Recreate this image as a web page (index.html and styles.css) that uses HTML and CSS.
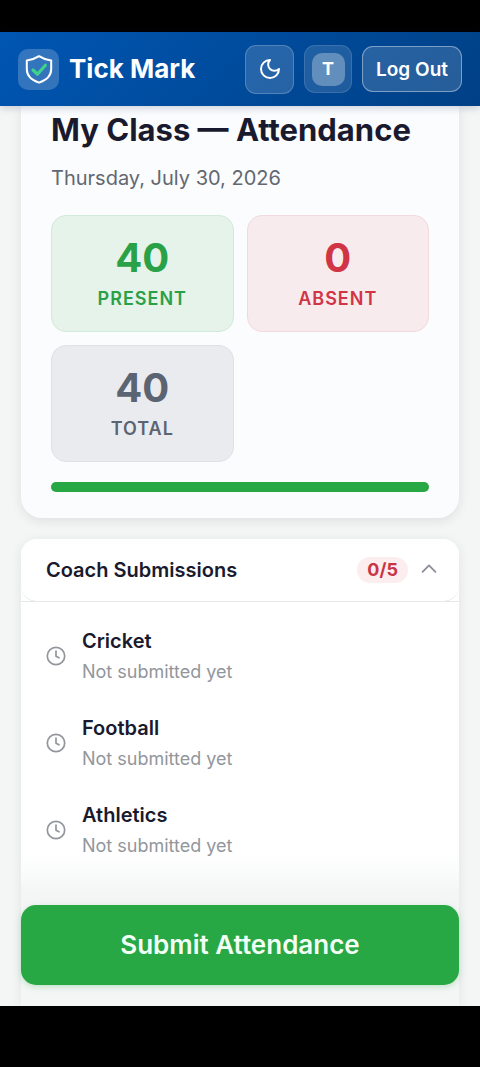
FILE: index.html
```html
<!DOCTYPE html>
<html lang="en">
<head>
<meta charset="utf-8">
<meta name="viewport" content="width=device-width, initial-scale=1">
<title>Tick Mark</title>
<link rel="stylesheet" href="styles.css">
</head>
<body>
<div class="app">
  <header class="topbar">
    <span class="logo">
      <svg width="34" height="34" viewBox="0 0 34 34" fill="none" stroke-linecap="round" stroke-linejoin="round" aria-hidden="true">
        <path d="M17 4.200C13.400 6.600 9 8 4.800 8.500V17c0 7 5.300 11.400 12.200 13.600C23.900 28.400 29.200 24 29.200 17V8.500C25 8 20.600 6.600 17 4.200Z" stroke="#fff" stroke-width="2"/>
        <path d="m11 18 4.400 4.200 8-9" stroke="#3fd28b" stroke-width="3.200"/>
      </svg>
    </span>
    <span class="brand">Tick Mark</span>
    <button class="icon-btn theme" type="button" aria-label="Dark mode">
      <svg width="24" height="24" viewBox="0 0 24 24" fill="none" stroke="#fff" stroke-width="2" stroke-linecap="round" stroke-linejoin="round" aria-hidden="true"><path d="M12 3a6 6 0 0 0 9 9 9 9 0 1 1-9-9Z"/></svg>
    </button>
    <button class="icon-btn profile" type="button" aria-label="Profile"><span class="avatar">T</span></button>
    <button class="logout" type="button">Log Out</button>
  </header>

  <main class="content">
    <section class="summary">
      <h1 class="title">My Class — Attendance</h1>
      <p class="date">Thursday, July 30, 2026</p>
      <div class="stats">
        <div class="stat present"><span class="num">40</span><span class="label">PRESENT</span></div>
        <div class="stat absent"><span class="num">0</span><span class="label">ABSENT</span></div>
        <div class="stat total"><span class="num">40</span><span class="label">TOTAL</span></div>
      </div>
      <div class="bar" role="progressbar" aria-label="Present" aria-valuemin="0" aria-valuemax="40" aria-valuenow="40"><div class="fill" style="width: 100%"></div></div>
    </section>

    <section class="coaches">
      <button class="coaches-head" type="button" aria-expanded="true">
        <span class="coaches-title">Coach Submissions</span>
        <span class="count">0/5</span>
        <svg width="22" height="22" viewBox="0 0 24 24" fill="none" stroke="#8b9098" stroke-width="2" stroke-linecap="round" stroke-linejoin="round" aria-hidden="true"><path d="m5 14 7-7 7 7"/></svg>
      </button>
      <ul class="list">
        <li class="item">
          <svg class="clock" viewBox="0 0 20 20" aria-hidden="true"><circle cx="10" cy="10" r="8.700"/><path d="M10 5v5.200l3 1.600"/></svg>
          <div><h2 class="name">Cricket</h2><p class="state">Not submitted yet</p></div>
        </li>
        <li class="item">
          <svg class="clock" viewBox="0 0 20 20" aria-hidden="true"><circle cx="10" cy="10" r="8.700"/><path d="M10 5v5.200l3 1.600"/></svg>
          <div><h2 class="name">Football</h2><p class="state">Not submitted yet</p></div>
        </li>
        <li class="item">
          <svg class="clock" viewBox="0 0 20 20" aria-hidden="true"><circle cx="10" cy="10" r="8.700"/><path d="M10 5v5.200l3 1.600"/></svg>
          <div><h2 class="name">Athletics</h2><p class="state">Not submitted yet</p></div>
        </li>
      </ul>
    </section>

    <div class="submit-bar">
      <button class="submit" type="button">Submit Attendance</button>
    </div>
  </main>
</div>
</body>
</html>
```
FILE: styles.css
```css
* { box-sizing: border-box; }
body {
  margin: 0;
  height: 100vh;
  padding: 32px 0 61px;
  background: #000;
  color: #1a1a2e;
  font-family: Inter, "Liberation Sans", sans-serif;
}
h1, h2, p, ul { margin: 0; padding: 0; }
button { font: inherit; color: inherit; border: 0; margin: 0; cursor: pointer; }

.app {
  height: 100%;
  display: flex;
  flex-direction: column;
  background: #f4f6f6;
}

.topbar {
  display: flex;
  align-items: center;
  height: 74px;
  flex: none;
  padding: 0 18px;
  background: linear-gradient(135deg, #0056b3, #004085);
  box-shadow: 0 2px 8px rgba(0, 30, 80, 0.2);
  color: #fff;
  z-index: 1;
}
.logo {
  display: grid;
  place-items: center;
  width: 41px;
  height: 41px;
  border-radius: 10px;
  background: rgba(255, 255, 255, 0.2);
}
.brand {
  flex: 1;
  margin-left: 10px;
  font-size: 26px;
  line-height: 32px;
  font-weight: 700;
  white-space: nowrap;
}
.icon-btn {
  display: grid;
  place-items: center;
  width: 49px;
  height: 49px;
  padding: 0;
  margin-right: 10px;
  border: 1px solid rgba(255, 255, 255, 0.2);
  border-radius: 11px;
  background: rgba(255, 255, 255, 0.15);
}
.profile {
  width: 48px;
  height: 48px;
  border-color: rgba(255, 255, 255, 0.12);
  background: rgba(255, 255, 255, 0.12);
}
.avatar {
  display: grid;
  place-items: center;
  width: 33px;
  height: 33px;
  padding-bottom: 1px;
  border-radius: 10px;
  background: rgba(255, 255, 255, 0.3);
  font-size: 18px;
  font-weight: 700;
}
.logout {
  height: 46px;
  padding: 0 13px;
  border: 1px solid rgba(255, 255, 255, 0.4);
  border-radius: 11px;
  background: rgba(255, 255, 255, 0.15);
  font-size: 19px;
  font-weight: 600;
  white-space: nowrap;
}

.content {
  position: relative;
  flex: 1;
  min-height: 0;
  overflow: hidden;
  padding: 0 21px;
  display: flex;
  flex-direction: column;
  gap: 21px;
}
.summary {
  flex: none;
  padding: 4px 30px 26px;
  border-radius: 0 0 21px 21px;
  background: #fbfcfe;
  box-shadow: 0 3px 12px rgba(0, 0, 0, 0.09);
}
.title {
  font-size: 31px;
  line-height: 40px;
  font-weight: 700;
  white-space: nowrap;
}
.date {
  margin-top: 14px;
  font-size: 20px;
  line-height: 28px;
  color: #626870;
}
.stats {
  display: grid;
  grid-template-columns: 1fr 1fr;
  gap: 13px;
  margin-top: 23px;
}
.stat {
  display: flex;
  flex-direction: column;
  align-items: center;
  padding: 16px 12px 20px;
  border: 1px solid;
  border-radius: 15px;
}
.num { font-size: 40px; line-height: 52px; font-weight: 700; }
.label { margin-top: 2px; font-size: 18px; line-height: 25px; font-weight: 600; letter-spacing: 1px; }
.present { color: #2aa147; background: #e6f3ea; border-color: #d2ead8; }
.absent { color: #d03545; background: #f8ebee; border-color: #f2d9dd; }
.total { color: #5b6472; background: #eaebef; border-color: #e0e1e6; }
.bar {
  height: 10px;
  margin-top: 20px;
  border-radius: 5px;
  background: #e5e7eb;
}
.fill { height: 100%; border-radius: 5px; background: #28a745; }

.coaches {
  flex: 1;
  border-radius: 16px 16px 0 0;
  background: #fff;
  box-shadow: 0 2px 12px rgba(0, 0, 0, 0.08);
}
.coaches-head {
  display: flex;
  align-items: center;
  width: 100%;
  height: 63px;
  padding: 0 19px 1px 25px;
  border-bottom: 1px solid #e6e8ea;
  border-radius: 16px;
  background: #fff;
  text-align: left;
}
.coaches-title { flex: 1; font-size: 20px; font-weight: 600; }
.count {
  margin-right: 10px;
  padding: 0 10px;
  border-radius: 13px;
  background: #fceeee;
  color: #c93446;
  font-size: 18px;
  line-height: 26px;
  font-weight: 700;
}
.list { list-style: none; border-top: 1px solid #e6e8ea; margin-top: -1px; padding-top: 11px; }
.item {
  display: flex;
  align-items: center;
  gap: 16px;
  padding: 13px 25px 14px;
}
.clock {
  width: 20px;
  height: 20px;
  fill: none;
  stroke: #92969c;
  stroke-width: 1.700;
  stroke-linecap: round;
  stroke-linejoin: round;
}
.name { font-size: 20px; line-height: 30px; font-weight: 600; }
.state { margin-top: 3px; font-size: 18px; line-height: 26px; padding-bottom: 1px; color: #92969c; }

.submit-bar {
  position: absolute;
  inset: auto 21px 0;
  padding: 50px 0 21px;
  background: linear-gradient(to top, #f4f6f6 75%, rgba(244, 246, 246, 0));
}
.submit {
  display: block;
  width: 100%;
  height: 80px;
  padding-bottom: 3px;
  border-radius: 15px;
  background: #28a745;
  box-shadow: 0 2px 6px rgba(40, 167, 69, 0.25);
  color: #f2fff5;
  font-size: 26px;
  font-weight: 600;
}
```
